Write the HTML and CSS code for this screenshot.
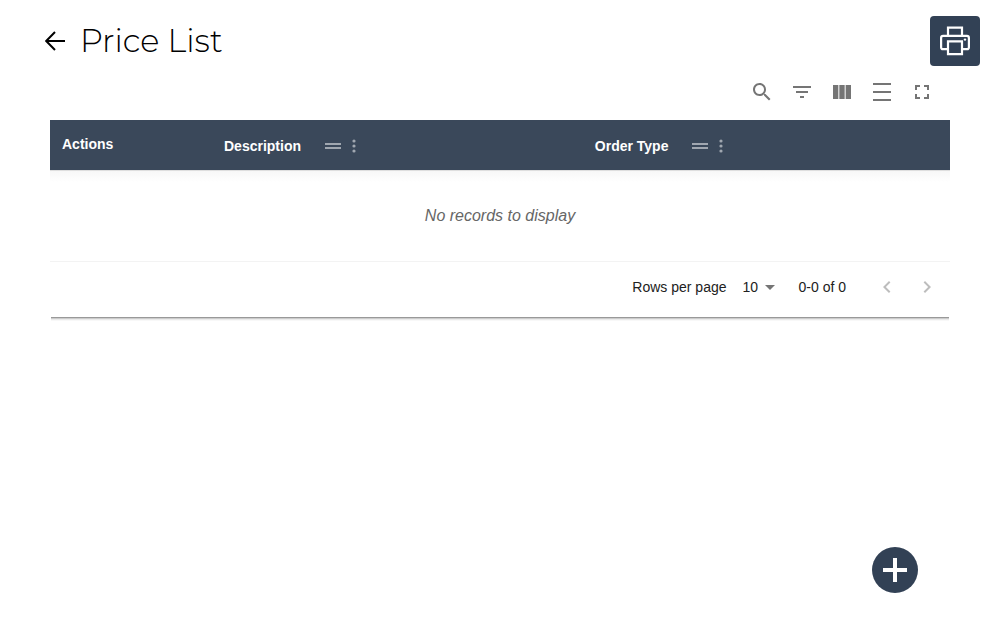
FILE: index.html
```html
<!DOCTYPE html>
<html lang="en">
<head>
<meta charset="utf-8">
<title>Price List</title>
<link rel="stylesheet" href="styles.css">
</head>
<body>
<header class="page-header">
  <a class="back" href="#" aria-label="Back"><svg viewBox="0 0 20 20"><path d="M20 10H1.5M10 1L1.2 10L10 19" fill="none" stroke="currentColor" stroke-width="2"/></svg></a>
  <h1 class="title">Price List</h1>
  <button class="print" aria-label="Print"><svg viewBox="0 0 30 30" fill="none" stroke="currentColor" stroke-width="2.2"><path d="M8 9V1.6h14V9M8 23.2H3q-1.9 0-1.9-2V12q0-2.2 2-2.2h23.8q2 0 2 2.2v9.2q0 2-1.9 2h-5"/><path d="M8 15.4h14v12.8H8z"/><circle cx="25" cy="13.6" r="1.2" fill="currentColor" stroke="none"/></svg></button>
</header>
<main class="card">
  <div class="toolbar">
    <button class="tool" aria-label="Search"><svg viewBox="0 0 24 24"><path d="M15.5 14h-.79l-.28-.27C15.41 12.59 16 11.11 16 9.5 16 5.91 13.09 3 9.5 3S3 5.91 3 9.5 5.91 16 9.5 16c1.61 0 3.09-.59 4.23-1.57l.27.28v.79l5 4.99L20.49 19l-4.99-5zm-6 0C7.01 14 5 11.99 5 9.5S7.01 5 9.5 5 14 7.01 14 9.5 11.99 14 9.5 14z"/></svg></button>
    <button class="tool" aria-label="Filters"><svg viewBox="0 0 24 24"><path d="M10 18h4v-2h-4v2zM3 6v2h18V6H3zm3 7h12v-2H6v2z"/></svg></button>
    <button class="tool" aria-label="Columns"><svg viewBox="0 0 24 24"><path d="M14.67 5v14H9.33V5h5.34zm1 14H21V5h-5.33v14zm-7.34 0V5H3v14h5.33z"/></svg></button>
    <button class="tool" aria-label="Density"><svg viewBox="0 0 24 24"><path d="M3 3h18v2H3V3zm0 16h18v2H3v-2zm0-8h18v2H3v-2z"/></svg></button>
    <button class="tool" aria-label="Full screen"><svg viewBox="0 0 24 24"><path d="M7 14H5v5h5v-2H7v-3zm-2-4h2V7h3V5H5v5zm12 7h-3v2h5v-5h-2v3zM14 5v2h3v3h2V5h-5z"/></svg></button>
  </div>
  <table class="grid">
    <thead>
      <tr>
        <th class="col-actions">Actions</th>
        <th class="col-description"><div class="head"><span>Description</span><button class="handle" aria-label="Move Description"><svg viewBox="0 0 20 20"><path d="M2 7h16v2H2zM2 11h16v2H2z"/></svg></button><button class="more" aria-label="Description actions"><svg viewBox="0 0 6 20"><circle cx="3" cy="5" r="1.6"/><circle cx="3" cy="10" r="1.6"/><circle cx="3" cy="15" r="1.6"/></svg></button></div></th>
        <th><div class="head"><span>Order Type</span><button class="handle" aria-label="Move Order Type"><svg viewBox="0 0 20 20"><path d="M2 7h16v2H2zM2 11h16v2H2z"/></svg></button><button class="more" aria-label="Order Type actions"><svg viewBox="0 0 6 20"><circle cx="3" cy="5" r="1.6"/><circle cx="3" cy="10" r="1.6"/><circle cx="3" cy="15" r="1.6"/></svg></button></div></th>
      </tr>
    </thead>
    <tbody>
      <tr><td class="empty" colspan="3">No records to display</td></tr>
    </tbody>
  </table>
  <footer class="pager">
    <label for="rows">Rows per page</label>
    <span class="select"><select id="rows"><option>10</option></select><svg class="caret" viewBox="0 0 10 5"><path d="M0 0h10L5 5z"/></svg></span>
    <span class="range">0-0 of 0</span>
    <button class="step" aria-label="Previous page" disabled><svg viewBox="0 0 24 24"><path d="M15.41 7.41L14 6l-6 6 6 6 1.41-1.41L10.83 12z"/></svg></button>
    <button class="step" aria-label="Next page" disabled><svg viewBox="0 0 24 24"><path d="M10 6L8.59 7.41 13.17 12l-4.58 4.59L10 18l6-6z"/></svg></button>
  </footer>
</main>
<button class="add" aria-label="Add"><svg viewBox="0 0 24 24"><path d="M10 0h4v10h10v4H14v10h-4V14H0v-4h10z"/></svg></button>
</body>
</html>
```
FILE: styles.css
```css
* { box-sizing: border-box; }
body {
  margin: 0;
  background: #fff;
  color: #212121;
  font: 14px/20px "Liberation Sans", Arial, sans-serif;
}
button {
  display: flex;
  align-items: center;
  justify-content: center;
  padding: 0;
  border: 0;
  background: none;
  color: inherit;
}
svg { display: block; fill: currentColor; }
.page-header {
  display: flex;
  align-items: center;
  padding: 16px 20px 0 45px;
}
.back { color: #000; }
.back svg { width: 20px; height: 20px; }
.title {
  margin: 0 auto 0 15px;
  color: #000;
  font: 300 32px/40px Montserrat, Inter, sans-serif;
}
.print {
  width: 50px;
  height: 50px;
  border-radius: 4px;
  background: #324155;
  color: #fff;
}
.print svg { width: 30px; height: 30px; fill: none; }
.card { margin: 0 50px; }
.card::after {
  content: "";
  display: block;
  height: 4px;
  margin: 0 1px;
  background: linear-gradient(#999 1px, #ccc 1px 2px, #eaeaea 2px 3px, #f8f8f8 3px);
}
.toolbar {
  display: flex;
  justify-content: flex-end;
  padding: 6px 8px 8px;
  color: #757575;
}
.tool { width: 40px; height: 40px; }
.tool svg { width: 24px; height: 24px; }
.grid {
  width: 100%;
  border-spacing: 0;
  table-layout: fixed;
}
.grid th {
  height: 50px;
  padding: 14px 12px;
  background: #3a485a;
  color: #fff;
  text-align: left;
  vertical-align: top;
}
.col-actions { width: 18%; }
.col-description { width: 41.2%; }
.head { display: flex; align-items: center; padding-top: 2px; }
.handle { margin-left: 22px; color: #a0a7b0; }
.handle svg { width: 20px; height: 20px; }
.more { margin-left: 8px; color: #a0a7b0; }
.more svg { width: 6px; height: 20px; }
.empty {
  height: 92px;
  padding: 0;
  border-bottom: 1px solid #f3f3f3;
  background: linear-gradient(#dedede 1px, #f7f7f7 1px, #fff 12px);
  color: #666;
  font-size: 16px;
  font-style: italic;
  text-align: center;
}
.pager {
  display: flex;
  align-items: center;
  justify-content: flex-end;
  height: 55px;
  padding: 0 3px 6px;
}
.select { position: relative; margin: 0 24px 0 16px; }
.select select {
  appearance: none;
  display: block;
  width: 32px;
  padding: 0;
  border: 0;
  background: none;
  color: inherit;
  font: inherit;
}
.caret {
  position: absolute;
  right: 0;
  top: 8px;
  width: 10px;
  height: 5px;
  color: #757575;
  pointer-events: none;
}
.range { margin-right: 21px; }
.step { width: 40px; height: 40px; color: #bdbdbd; }
.step svg { width: 24px; height: 24px; }
.add {
  position: fixed;
  right: 82px;
  bottom: 32px;
  width: 46px;
  height: 46px;
  border-radius: 50%;
  background: #324155;
  color: #fff;
}
.add svg { width: 24px; height: 24px; }
```
